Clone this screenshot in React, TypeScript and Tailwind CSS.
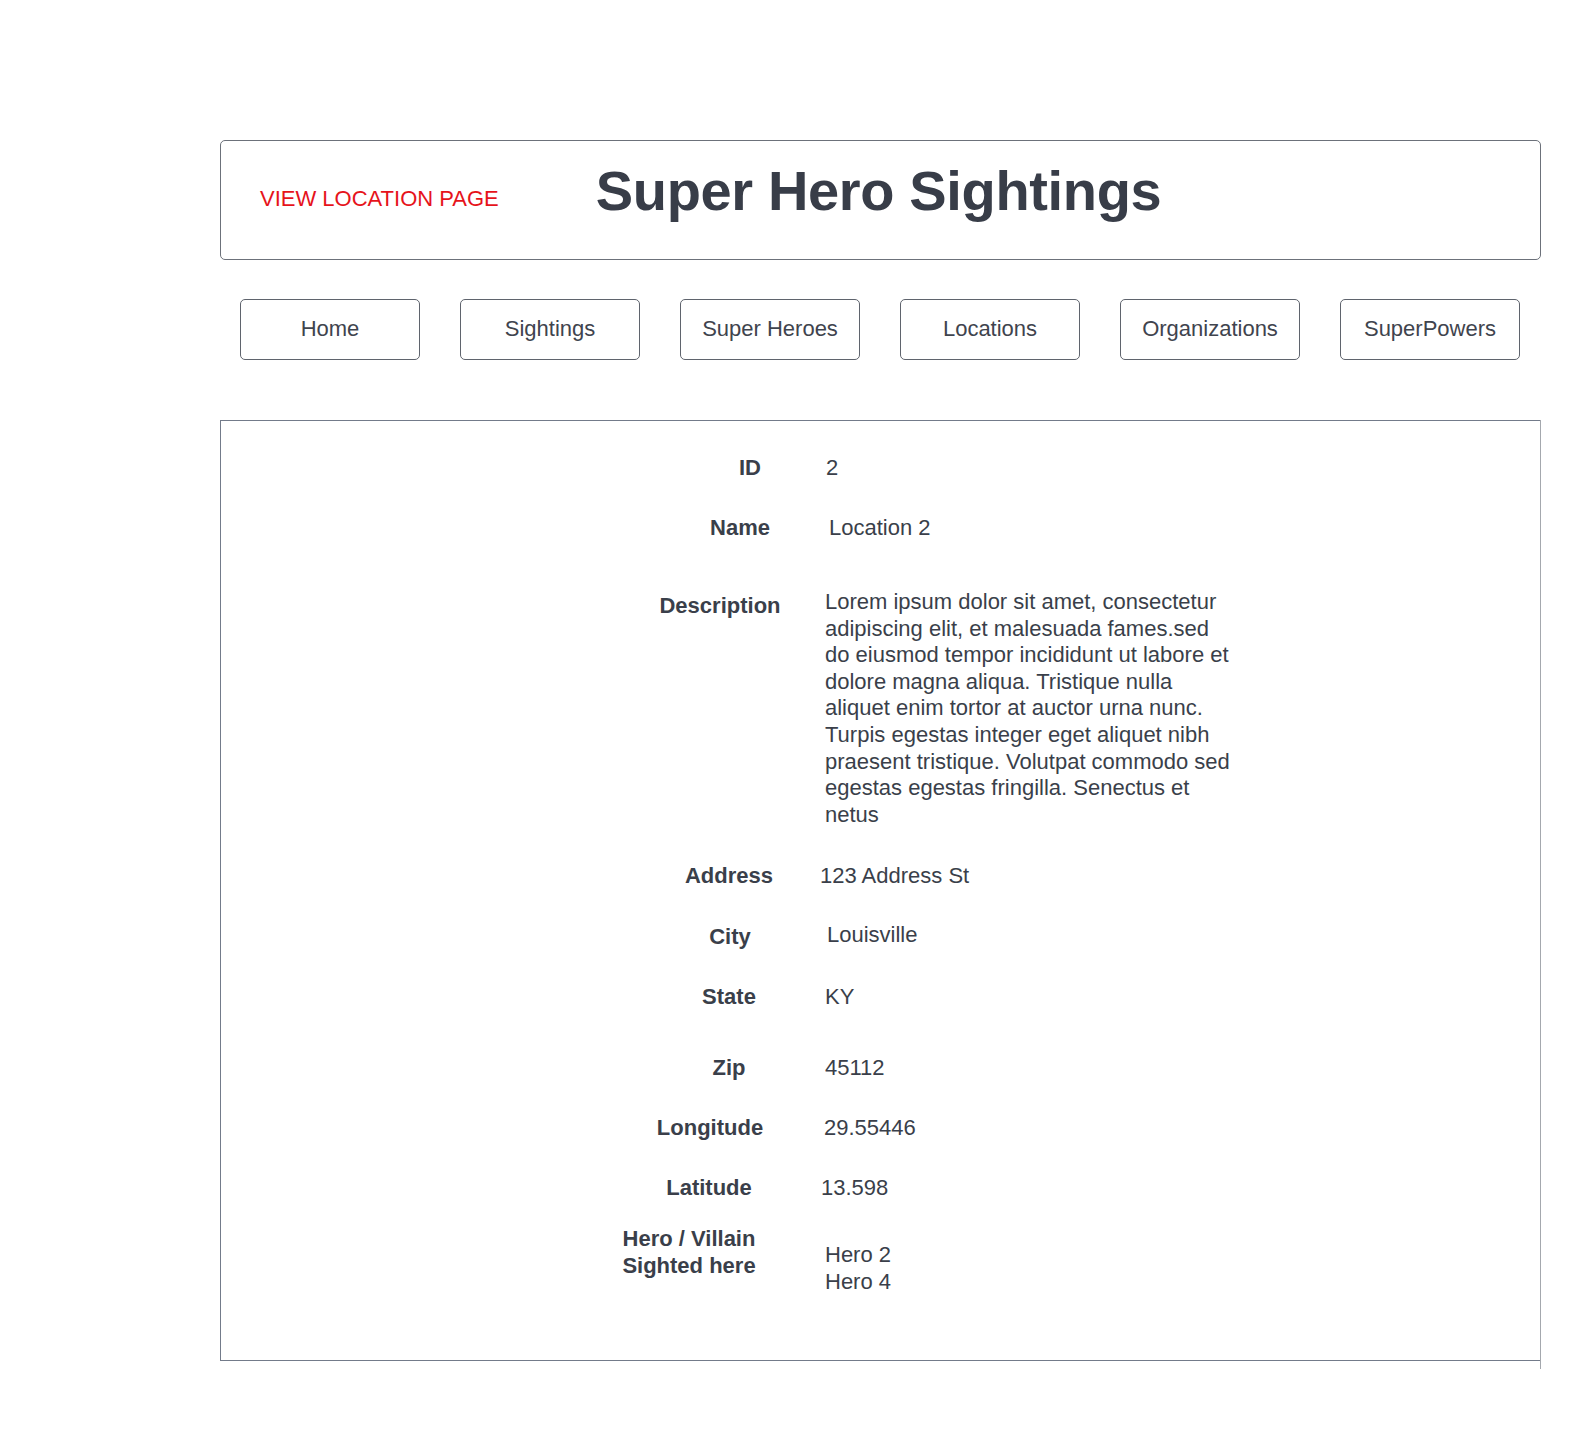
const navItems = ['Home', 'Sightings', 'Super Heroes', 'Locations', 'Organizations', 'SuperPowers'];

const description = [
    'Lorem ipsum dolor sit amet, consectetur',
    'adipiscing elit, et malesuada fames.sed',
    'do eiusmod tempor incididunt ut labore et',
    'dolore magna aliqua. Tristique nulla',
    'aliquet enim tortor at auctor urna nunc.',
    'Turpis egestas integer eget aliquet nibh',
    'praesent tristique. Volutpat commodo sed',
    'egestas egestas fringilla. Senectus et',
    'netus',
];

// each row spells its own offsets — the wireframe isn't on a strict grid
const rows = [
    { label: ['ID'], value: ['2'], row: 'h-[60px]', labelCls: 'ml-[459px]', valueCls: 'ml-[6px]' },
    { label: ['Name'], value: ['Location 2'], row: 'h-[74px]', labelCls: 'ml-[449px]', valueCls: 'ml-[19px]' },
    { label: ['Description'], value: description, row: 'h-[274px]', labelCls: 'ml-[429px] mt-[4px]', valueCls: 'ml-[35px]' },
    { label: ['Address'], value: ['123 Address St'], row: 'h-[59px]', labelCls: 'ml-[438px]', valueCls: 'ml-[21px]' },
    { label: ['City'], value: ['Louisville'], row: 'h-[62px]', labelCls: 'ml-[439px] mt-[2px]', valueCls: 'ml-[27px]' },
    { label: ['State'], value: ['KY'], row: 'h-[71px]', labelCls: 'ml-[438px]', valueCls: 'ml-[26px]' },
    { label: ['Zip'], value: ['45112'], row: 'h-[60px]', labelCls: 'ml-[438px]', valueCls: 'ml-[26px]' },
    { label: ['Longitude'], value: ['29.55446'], row: 'h-[60px]', labelCls: 'ml-[419px]', valueCls: 'ml-[44px]' },
    { label: ['Latitude'], value: ['13.598'], row: 'h-[50px]', labelCls: 'ml-[418px]', valueCls: 'ml-[42px]' },
    { label: ['Hero / Villain', 'Sighted here'], value: ['Hero 2', 'Hero 4'], row: 'h-[80px]', labelCls: 'ml-[398px] leading-[27.3px]', valueCls: 'ml-[66px] mt-[17px]' },
];

export default function App() {
    return (
        <div className="min-h-[1440px] bg-white text-[#3a3f4a] font-['Liberation_Sans',Arial,sans-serif] pt-[140px] pl-[220px]">
            <div className="w-[1321px]">
                {/* Header */}
                <header className="h-[120px] border border-[#6c717a] rounded-[5px] flex items-center pl-[39px]">
                    <span className="text-[22px] leading-[26.6px] text-[#e6131b] mb-[1px]">VIEW LOCATION PAGE</span>
                    <h1 className="ml-[97px] mb-[18px] text-[56px] leading-[60px] font-bold tracking-[-0.35px] text-[#383d48]">
                        Super Hero Sightings
                    </h1>
                </header>

                {/* Nav */}
                <nav className="mt-[39px] px-[20px] flex gap-[40px]">
                    {navItems.map((item) => (
                        <button
                            key={item}
                            className="w-[180px] h-[61px] border border-[#5f646d] rounded-[5px] flex items-center justify-center pb-[3px] text-[22px] text-[#3f444e]"
                        >
                            {item}
                        </button>
                    ))}
                </nav>

                {/* Details */}
                <div className="relative mt-[60px]">
                    <section className="h-[941px] border-l border-t border-b border-[#737b8a] pt-[34px] text-[22px] leading-[26.6px]">
                        {rows.map((r) => (
                            <div key={r.label.join(' ')} className={`flex items-start ${r.row}`}>
                                <div className={`w-[140px] shrink-0 text-center font-bold ${r.labelCls}`}>
                                    {r.label.map((l) => <div key={l}>{l}</div>)}
                                </div>
                                <div className={`whitespace-nowrap ${r.valueCls}`}>
                                    {r.value.map((v) => <div key={v}>{v}</div>)}
                                </div>
                            </div>
                        ))}
                    </section>
                    <div className="absolute right-0 top-0 -bottom-[8px] w-px bg-[#a4a8ae]" />
                </div>
            </div>
        </div>
    );
}
